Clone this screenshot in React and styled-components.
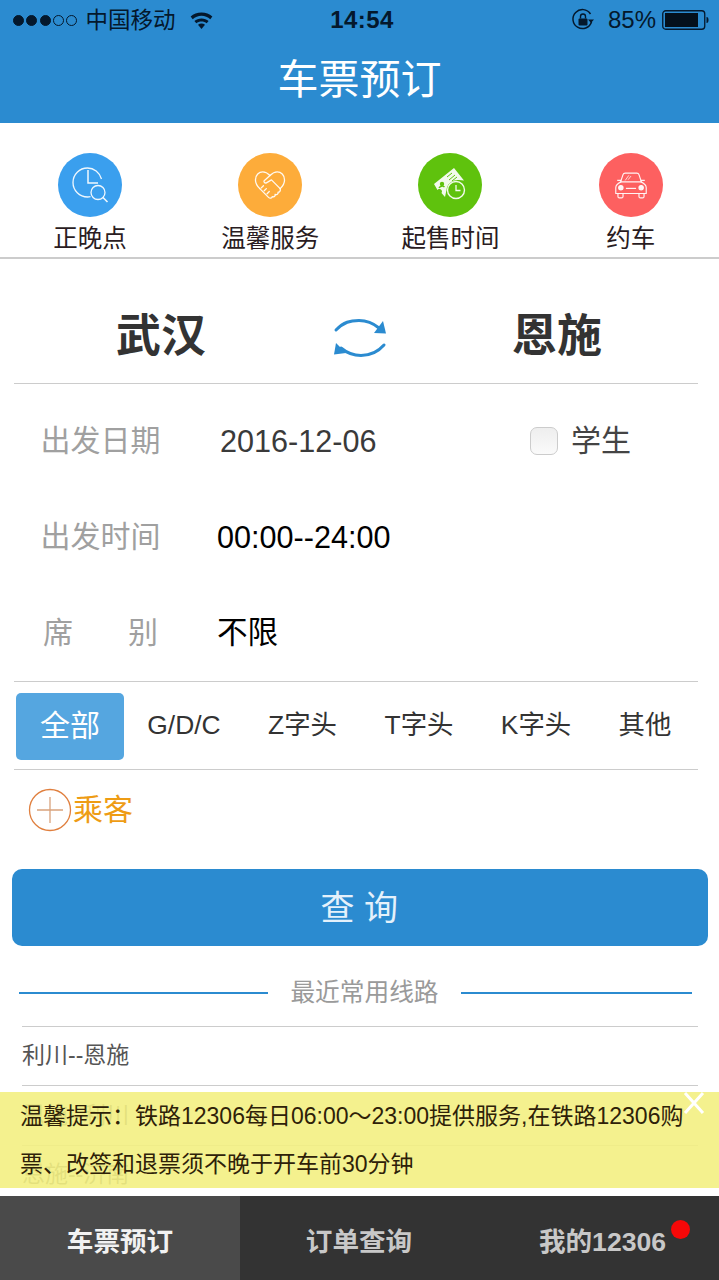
import React from 'react';
import styled, { createGlobalStyle } from 'styled-components';

const GlobalStyle = createGlobalStyle`
  * {
    box-sizing: border-box;
  }

  html, body {
    margin: 0;
    padding: 0;
    background: #fff;
  }

  body {
    font-family: "Liberation Sans", "Noto Sans CJK SC", sans-serif;
    line-height: 1.2;
  }
`;

const Page = styled.div`
  position: relative;
  width: 719px;
  height: 1280px;
  overflow: hidden;
  background: #fff;
`;

const Header = styled.header`
  height: 123px;
  background: #2b8bd0;
`;

const StatusBar = styled.div`
  display: grid;
  grid-template-columns: 1fr auto 1fr;
  align-items: center;
  height: 40px;
  padding: 0 10px 0 13px;
  color: #04182c;
`;

const StatusLeft = styled.div`
  display: flex;
  align-items: center;
  font-size: 22.5px;
`;

const Signal = styled.span`
  width: 11px;
  height: 11px;
  margin-right: 2.3px;
  border-radius: 50%;
  border: 1px solid #04182c;
  background: ${({ $on }) => ($on ? '#04182c' : 'transparent')};
`;

const Carrier = styled.span`
  margin: 0 14px 0 6px;
`;

const Clock = styled.div`
  margin-left: 2px;
  font-size: 24px;
  font-weight: 700;
  letter-spacing: 0.4px;
`;

const StatusRight = styled.div`
  display: flex;
  align-items: center;
  justify-content: flex-end;
  font-size: 24px;
`;

const Percent = styled.span`
  margin: 0 6px 0 13px;
`;

const Title = styled.h1`
  margin: 0;
  height: 83px;
  padding-bottom: 1px;
  display: flex;
  align-items: center;
  justify-content: center;
  font-size: 41px;
  font-weight: 400;
  color: #fff;
`;

const Shortcuts = styled.nav`
  display: grid;
  grid-template-columns: repeat(4, 180.2px);
  height: 136px;
  padding-top: 30px;
  border-bottom: 2px solid #ccc;
`;

const Shortcut = styled.div`
  display: flex;
  flex-direction: column;
  align-items: center;
`;

const ShortcutIcon = styled.div`
  width: 64px;
  height: 64px;
  border-radius: 50%;
  background: ${({ $color }) => $color};
  color: rgba(255, 255, 255, 0.92);
  display: flex;
  align-items: center;
  justify-content: center;
`;

const ShortcutLabel = styled.div`
  margin-top: 5px;
  font-size: 24.5px;
  line-height: 34px;
  color: #2a1c22;
`;

const Route = styled.div`
  display: grid;
  grid-template-columns: 294px 103px 1fr;
  align-items: center;
  height: 125px;
  margin: 0 21px 0 14px;
  padding-top: 32px;
  border-bottom: 1px solid #ccc;
`;

const City = styled.div`
  padding-left: ${({ $pad }) => $pad || 0}px;
  font-size: 45px;
  font-weight: 700;
  color: #333;
  text-align: center;
`;

const SwapIcon = styled.div`
  display: flex;
  justify-content: center;
  padding-top: 1px;
`;

const FormGroup = styled.div`
  padding-top: 9.5px;
  height: 297px;
`;

const FormRow = styled.div`
  display: flex;
  align-items: center;
  height: 95.7px;
`;

const FormLabel = styled.div`
  width: 203px;
  padding-left: 40.5px;
  font-size: 30px;
  color: #a0a0a0;
`;

const SpreadLabel = styled(FormLabel)`
  display: flex;
  justify-content: space-between;
  width: 158px;
  margin-right: 60px;
  padding-left: 43px;
`;

const FormValue = styled.div`
  flex: 1;
  margin-left: ${({ $inset }) => $inset ?? 14}px;
  font-size: ${({ $size }) => $size || 30.6}px;
  color: ${({ $muted }) => ($muted ? '#3a3a3a' : '#000')};
`;

const Student = styled.label`
  display: flex;
  align-items: center;
  gap: 13px;
  width: 189px;
  font-size: 30px;
  color: #444;
`;

const CheckBox = styled.span`
  width: 28px;
  height: 28px;
  border: 1px solid #ccc;
  border-radius: 7px;
  background: linear-gradient(#eee, #fafafa);
`;

const Filters = styled.div`
  display: grid;
  grid-template-columns: 108px 120px 117px 116px 118px 100px;
  align-items: center;
  width: 684px;
  height: 89px;
  margin-left: 14px;
  padding: 1px 0 0 2px;
  border-top: 1px solid #ccc;
  border-bottom: 1px solid #ccc;
`;

const Filter = styled.div`
  height: 67px;
  display: flex;
  align-items: center;
  justify-content: center;
  border-radius: 5px;
  background: ${({ $active }) => ($active ? '#55a6e0' : 'transparent')};
  color: ${({ $active }) => ($active ? '#fff' : '#333')};
  font-size: ${({ $active }) => ($active ? 30 : 26.4)}px;
`;

const Passenger = styled.div`
  display: flex;
  align-items: center;
  gap: 1px;
  height: 80px;
  padding-left: 28px;
  color: #ee9c14;
  font-size: 30px;
`;

const QueryButton = styled.button`
  display: block;
  width: 696px;
  height: 77px;
  margin: 19px 0 0 12px;
  padding: 0 0 5px;
  border: 0;
  border-radius: 10px;
  background: #2b8bd0;
  color: #e4f1fb;
  font-family: inherit;
  font-size: 34px;
  letter-spacing: 9.5px;
  text-indent: 8px;
`;

const RecentTitle = styled.div`
  display: grid;
  grid-template-columns: 249px 193px 231px;
  align-items: center;
  height: 80px;
  padding: 14px 0 0 19px;
  color: #9a9a9a;
  font-size: 24.7px;
  text-align: center;

  &::before,
  &::after {
    content: '';
    height: 2px;
    background: #2b8bd0;
  }
`;

const RecentList = styled.div`
  margin: 0 21px 0 22px;
  border-top: 1px solid #ccc;
`;

const RouteItem = styled.div`
  display: flex;
  align-items: center;
  height: 59.3px;
  border-bottom: 1px solid #ccc;
  font-size: 23px;
  color: #555;
`;

const Notice = styled.div`
  position: absolute;
  left: 0;
  right: 0;
  top: 1092px;
  height: 96px;
  background: rgba(243, 240, 130, 0.9);
  padding: 0 22px 0 20px;
  font-size: 23px;
  line-height: 48px;
  color: #2e2108;
`;

const NoticeClose = styled.div`
  position: absolute;
  top: 0;
  right: 14px;
  color: #fff;
  line-height: 0;
`;

const BottomGap = styled.div`
  position: absolute;
  left: 0;
  right: 0;
  top: 1188px;
  height: 8px;
  background: #fff;
`;

const TabBar = styled.div`
  position: absolute;
  left: 0;
  right: 0;
  bottom: 0;
  height: 84px;
  display: grid;
  grid-template-columns: 240px 238px 241px;
  background: #333;
`;

const Tab = styled.div`
  position: relative;
  display: flex;
  align-items: center;
  justify-content: center;
  padding: 10px 0 0 ${({ $pad }) => $pad || 0}px;
  font-size: 26.6px;
  font-weight: 700;
  color: ${({ $active }) => ($active ? '#f2f2f2' : '#c8c8c8')};
  background: ${({ $active }) => ($active ? '#4a4a4a' : 'transparent')};
`;

const Badge = styled.span`
  position: absolute;
  top: 24px;
  right: 29px;
  width: 19px;
  height: 19px;
  border-radius: 50%;
  background: #f70808;
`;

const ClockIcon = () => (
  <svg width="64" height="64" viewBox="0 0 64 64" fill="none" stroke="currentColor" strokeWidth="1.3">
    <path d="M43.500 26C41.500 19.500 36 15 29.500 15C21.500 15 15 21.500 15 29.500S21.500 44 29.500 44C30.500 44 31.500 43.900 32.500 43.700" />
    <path d="M30 17V30H40" strokeWidth="1.500" />
    <circle cx="40" cy="39.500" r="7" />
    <path d="M45 44.500L49.500 49" strokeWidth="1.600" />
  </svg>
);

const HandshakeIcon = () => (
  <svg width="32" height="32" viewBox="0 0 44 44" fill="none" stroke="currentColor" strokeWidth="1.800" strokeLinejoin="round" strokeLinecap="round">
    <path d="M8 27C4 23 2 19 2 15C2 8 7 4 12 4c4 0 7 2 10 5c3-3 6-5 10-5c5 0 10 4 10 11c0 4-2 8-6 12" />
    <path d="M22 9l-8 7c-1 2 1 4 3 3l7-4l12 12" />
    <path d="M8 27l12 12c2 2 5 1 5-1c2 1 5-1 4-3c2 1 5-1 4-3c2 0 4-2 3-5" />
    <path d="M13 23l-3 3M17 27l-3 3M21 31l-3 3" />
  </svg>
);

const TicketIcon = () => (
  <svg width="64" height="64" viewBox="0 0 64 64">
    <path fill="currentColor" d="M36 15L46 27.500L41 27C34 26.500 29 31 28.500 37L27 44L23.500 40C24.500 38.500 24 36.500 22 36C20.500 35.800 20 36.500 19.500 37L16 31Z" />
    <circle cx="24" cy="31" r="2.200" fill="#5fc20d" />
    <path d="M21 35c1-2 4-2.500 5.500-1" stroke="#5fc20d" strokeWidth="1.400" fill="none" />
    <path d="M29 24l5-4M31 27l6-5M34 28l5-4" stroke="#5fc20d" strokeWidth="1" />
    <circle cx="38" cy="37" r="8.500" fill="none" stroke="currentColor" strokeWidth="1.400" />
    <path d="M38 32v5.500h4.500" fill="none" stroke="currentColor" strokeWidth="1.300" />
  </svg>
);

const CarIcon = () => (
  <svg width="34" height="29" viewBox="0 0 46 40" fill="none" stroke="currentColor" strokeWidth="1.600" strokeLinejoin="round">
    <path d="M9 14L12 5C12.500 3.500 14 3 15 3H31C32.500 3 33.500 3.500 34 5L37 14" />
    <path d="M4 13h5v3M42 13h-5v3" />
    <path d="M9 15H37C41 17 44 19 44 23V31H2V23C2 19 5 17 9 15Z" />
    <path d="M5 31v4c0 1.500 1 2 2 2h3c1 0 2-.5 2-2v-4M34 31v4c0 1.500 1 2 2 2h3c1 0 2-.5 2-2v-4" />
    <circle cx="9" cy="23" r="3" fill="currentColor" />
    <circle cx="37" cy="23" r="3" fill="currentColor" />
    <path d="M16 24h14" />
    <path d="M15 13l5-7M19 12l4-5" strokeWidth="1.100" />
  </svg>
);

const WifiIcon = () => (
  <svg width="23" height="17" viewBox="0 0 24 18" fill="#04182c" style={{ display: 'block' }}>
    <path d="M12 18L8.300 13.400C10.500 11.800 13.500 11.800 15.700 13.400Z" />
    <path d="M12 6.800C15 6.800 17.500 7.800 19.500 9.500L17.500 12C16 10.700 14 10 12 10S8 10.700 6.500 12L4.500 9.500C6.500 7.800 9 6.800 12 6.800Z" />
    <path d="M12 .5C16.500 .5 20.500 2.100 23.500 4.800L21.300 7.600C18.800 5.300 15.500 4 12 4S5.200 5.300 2.700 7.600L.5 4.800C3.500 2.100 7.500 .5 12 .5Z" />
  </svg>
);

const RotationLockIcon = () => (
  <svg width="24" height="24" viewBox="0 0 24 24" fill="none" style={{ display: 'block' }}>
    <path d="M20.500 14A9.500 9.500 0 1 1 19.500 6" stroke="#04182c" strokeWidth="1.500" />
    <path d="M17 11.500h6l-3 3.500Z" fill="#04182c" />
    <rect x="7.500" y="10.500" width="9" height="7" rx="1" fill="#04182c" />
    <path d="M9.500 10.500V8.500a2.500 2.500 0 0 1 5 0v2" stroke="#04182c" strokeWidth="1.400" />
  </svg>
);

const BatteryIcon = () => (
  <svg width="47" height="20" viewBox="0 0 47 20" style={{ display: 'block' }}>
    <rect x="0.750" y="0.750" width="42" height="18.500" rx="3" fill="none" stroke="#04182c" strokeWidth="1.300" />
    <rect x="3" y="3" width="33" height="14" fill="#04101c" />
    <path d="M44.500 7c1.500 0 2 1 2 3s-.5 3-2 3Z" fill="#04182c" />
  </svg>
);

const SwapArrows = () => (
  <svg width="56" height="42" viewBox="0 0 56 42" fill="none" style={{ display: 'block' }}>
    <path d="M4 13C12 5 18 3.500 27 3.500C35 3.500 41 6 47 11" stroke="#2b8bd0" strokeWidth="3" strokeLinecap="round" />
    <path d="M51 4L54 16.500L42 16Z" fill="#2b8bd0" />
    <path d="M52 28C45 36 38 38.500 29 38.500C21 38.500 15 36 9 31" stroke="#2b8bd0" strokeWidth="3" strokeLinecap="round" />
    <path d="M4 26L2 37.500L14 36Z" fill="#2b8bd0" />
  </svg>
);

const PlusCircle = () => (
  <svg width="44" height="44" viewBox="0 0 44 44" fill="none" style={{ display: 'block' }}>
    <circle cx="22" cy="22" r="20.500" stroke="#e07f3e" strokeWidth="1.300" />
    <path d="M9 22h26M22 9v26" stroke="#d9a27c" strokeWidth="1.300" />
  </svg>
);

const CloseX = () => (
  <svg width="22" height="22" viewBox="0 0 22 22" stroke="currentColor" strokeWidth="3">
    <path d="M2 1l18 20M20 1L2 21" />
  </svg>
);

const shortcuts = [
  { label: '正晚点', color: '#3a9fee', icon: <ClockIcon /> },
  { label: '温馨服务', color: '#fdac3a', icon: <HandshakeIcon /> },
  { label: '起售时间', color: '#5fc20d', icon: <TicketIcon /> },
  { label: '约车', color: '#fd6060', icon: <CarIcon /> },
];

const filters = ['全部', 'G/D/C', 'Z字头', 'T字头', 'K字头', '其他'];

export default function App() {
  return (
    <Page>
      <GlobalStyle />
      <Header>
        <StatusBar>
          <StatusLeft>
            {[1, 1, 1, 0, 0].map((on, i) => (
              <Signal key={i} $on={on} />
            ))}
            <Carrier>中国移动</Carrier>
            <WifiIcon />
          </StatusLeft>
          <Clock>14:54</Clock>
          <StatusRight>
            <RotationLockIcon />
            <Percent>85%</Percent>
            <BatteryIcon />
          </StatusRight>
        </StatusBar>
        <Title>车票预订</Title>
      </Header>

      <Shortcuts>
        {shortcuts.map((s) => (
          <Shortcut key={s.label}>
            <ShortcutIcon $color={s.color}>{s.icon}</ShortcutIcon>
            <ShortcutLabel>{s.label}</ShortcutLabel>
          </Shortcut>
        ))}
      </Shortcuts>

      <Route>
        <City>武汉</City>
        <SwapIcon>
          <SwapArrows />
        </SwapIcon>
        <City $pad={5}>恩施</City>
      </Route>

      <FormGroup>
        <FormRow>
          <FormLabel>出发日期</FormLabel>
          <FormValue $muted $inset={17}>2016-12-06</FormValue>
          <Student>
            <CheckBox />
            学生
          </Student>
        </FormRow>
        <FormRow>
          <FormLabel>出发时间</FormLabel>
          <FormValue>00:00--24:00</FormValue>
        </FormRow>
        <FormRow>
          <SpreadLabel>
            <span>席</span>
            <span>别</span>
          </SpreadLabel>
          <FormValue $inset={-1}>不限</FormValue>
        </FormRow>
      </FormGroup>

      <Filters>
        {filters.map((f, i) => (
          <Filter key={f} $active={i === 0}>{f}</Filter>
        ))}
      </Filters>

      <Passenger>
        <PlusCircle />
        乘客
      </Passenger>

      <QueryButton>查询</QueryButton>

      <RecentTitle>
        <span>最近常用线路</span>
      </RecentTitle>
      <RecentList>
        <RouteItem>利川--恩施</RouteItem>
        <RouteItem>恩施--利川</RouteItem>
        <RouteItem>恩施--济南</RouteItem>
      </RecentList>

      <Notice>
        温馨提示：铁路12306每日06:00～23:00提供服务,在铁路12306购票、改签和退票须不晚于开车前30分钟
        <NoticeClose>
          <CloseX />
        </NoticeClose>
      </Notice>

      <BottomGap />
      <TabBar>
        <Tab $active>车票预订</Tab>
        <Tab>订单查询</Tab>
        <Tab $pad={8}>
          我的12306
          <Badge />
        </Tab>
      </TabBar>
    </Page>
  );
}
